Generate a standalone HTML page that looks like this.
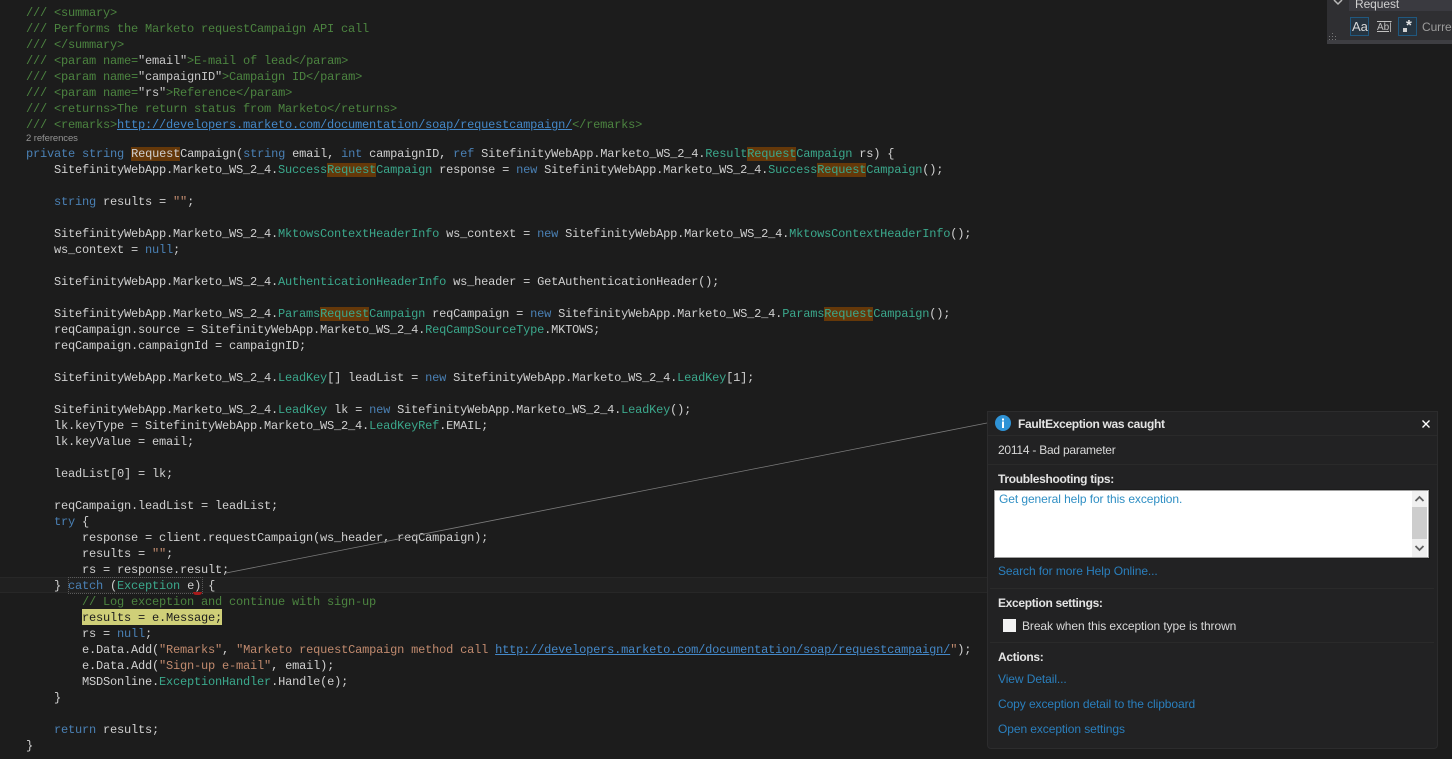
<!DOCTYPE html>
<html><head><meta charset="utf-8"><style>
html,body{margin:0;padding:0;background:#1c1c1c}
#p{position:relative;width:1452px;height:759px;overflow:hidden;background:#1c1c1c}
.l{position:absolute;left:26px;height:16px;margin-top:1px;font:12px/16px "Liberation Mono",monospace;letter-spacing:-.2px;color:#d0d0d0;white-space:pre}
.c{color:#4c8440}.w{color:#c8c8c8}.k{color:#4a80b4}.t{color:#3ba88c}.s{color:#c08a6e}
.u{color:#4488c8;text-decoration:underline}
.h{background:#653809}
.a{position:absolute;font:12px/16px "Liberation Sans",sans-serif;letter-spacing:-.08px;color:#d8d8d8;white-space:pre}
.b{font-weight:bold;color:#e4e4e4;letter-spacing:-.32px}
.lk{color:#2a7fbd}
.d{position:absolute;height:1px;background:#2a2a2a}
</style></head><body><div id="p">
<div style="position:absolute;left:0;top:577px;width:987px;height:14px;background:#202020;border-top:1px solid #272727;border-bottom:1px solid #272727"></div>
<div class="l c" style="top:4px">/// &lt;summary&gt;</div>
<div class="l c" style="top:20px">/// Performs the Marketo requestCampaign API call</div>
<div class="l c" style="top:36px">/// &lt;/summary&gt;</div>
<div class="l c" style="top:52px">/// &lt;param name=<span class="w">"email"</span>&gt;E-mail of lead&lt;/param&gt;</div>
<div class="l c" style="top:68px">/// &lt;param name=<span class="w">"campaignID"</span>&gt;Campaign ID&lt;/param&gt;</div>
<div class="l c" style="top:84px">/// &lt;param name=<span class="w">"rs"</span>&gt;Reference&lt;/param&gt;</div>
<div class="l c" style="top:100px">/// &lt;returns&gt;The return status from Marketo&lt;/returns&gt;</div>
<div class="l c" style="top:116px">/// &lt;remarks&gt;<span class="u">http://developers.marketo.com/documentation/soap/requestcampaign/</span>&lt;/remarks&gt;</div>
<div class="a" style="left:26px;top:132px;font-size:9.5px;line-height:13px;color:#949494">2 references</div>
<div class="l" style="top:145px"><span class="k">private</span> <span class="k">string</span> <span class="h">Request</span>Campaign(<span class="k">string</span> email, <span class="k">int</span> campaignID, <span class="k">ref</span> SitefinityWebApp.Marketo_WS_2_4.<span class="t">Result</span><span class="t h">Request</span><span class="t">Campaign</span> rs) {</div>
<div class="l" style="top:161px">    SitefinityWebApp.Marketo_WS_2_4.<span class="t">Success</span><span class="t h">Request</span><span class="t">Campaign</span> response = <span class="k">new</span> SitefinityWebApp.Marketo_WS_2_4.<span class="t">Success</span><span class="t h">Request</span><span class="t">Campaign</span>();</div>
<div class="l" style="top:193px">    <span class="k">string</span> results = <span class="s">""</span>;</div>
<div class="l" style="top:225px">    SitefinityWebApp.Marketo_WS_2_4.<span class="t">MktowsContextHeaderInfo</span> ws_context = <span class="k">new</span> SitefinityWebApp.Marketo_WS_2_4.<span class="t">MktowsContextHeaderInfo</span>();</div>
<div class="l" style="top:241px">    ws_context = <span class="k">null</span>;</div>
<div class="l" style="top:273px">    SitefinityWebApp.Marketo_WS_2_4.<span class="t">AuthenticationHeaderInfo</span> ws_header = GetAuthenticationHeader();</div>
<div class="l" style="top:305px">    SitefinityWebApp.Marketo_WS_2_4.<span class="t">Params</span><span class="t h">Request</span><span class="t">Campaign</span> reqCampaign = <span class="k">new</span> SitefinityWebApp.Marketo_WS_2_4.<span class="t">Params</span><span class="t h">Request</span><span class="t">Campaign</span>();</div>
<div class="l" style="top:321px">    reqCampaign.source = SitefinityWebApp.Marketo_WS_2_4.<span class="t">ReqCampSourceType</span>.MKTOWS;</div>
<div class="l" style="top:337px">    reqCampaign.campaignId = campaignID;</div>
<div class="l" style="top:369px">    SitefinityWebApp.Marketo_WS_2_4.<span class="t">LeadKey</span>[] leadList = <span class="k">new</span> SitefinityWebApp.Marketo_WS_2_4.<span class="t">LeadKey</span>[1];</div>
<div class="l" style="top:401px">    SitefinityWebApp.Marketo_WS_2_4.<span class="t">LeadKey</span> lk = <span class="k">new</span> SitefinityWebApp.Marketo_WS_2_4.<span class="t">LeadKey</span>();</div>
<div class="l" style="top:417px">    lk.keyType = SitefinityWebApp.Marketo_WS_2_4.<span class="t">LeadKeyRef</span>.EMAIL;</div>
<div class="l" style="top:433px">    lk.keyValue = email;</div>
<div class="l" style="top:465px">    leadList[0] = lk;</div>
<div class="l" style="top:497px">    reqCampaign.leadList = leadList;</div>
<div class="l" style="top:513px">    <span class="k">try</span> {</div>
<div class="l" style="top:529px">        response = client.requestCampaign(ws_header, reqCampaign);</div>
<div class="l" style="top:545px">        results = <span class="s">""</span>;</div>
<div class="l" style="top:561px">        rs = response.result;</div>
<div style="position:absolute;left:68px;top:577px;width:133px;height:15px;border:1px dotted #5a5a5a"></div>
<div class="l" style="top:577px">    } <span class="k">catch</span> (<span class="t">Exception</span> e) {</div>
<div style="position:absolute;left:193px;top:592px;width:9px;height:3px;background:#a81a1a;border-radius:0 0 4px 4px"></div>
<div class="l c" style="top:593px">        // Log exception and continue with sign-up</div>
<div style="position:absolute;left:82px;top:609px;width:140px;height:16px;background:#cfcf78"></div>
<div class="l" style="top:609px;color:#1c1c1c">        results = e.Message;</div>
<div class="l" style="top:625px">        rs = <span class="k">null</span>;</div>
<div class="l" style="top:641px">        e.Data.Add(<span class="s">"Remarks"</span>, <span class="s">"Marketo requestCampaign method call </span><span class="u">http://developers.marketo.com/documentation/soap/requestcampaign/</span><span class="s">"</span>);</div>
<div class="l" style="top:657px">        e.Data.Add(<span class="s">"Sign-up e-mail"</span>, email);</div>
<div class="l" style="top:673px">        MSDSonline.<span class="t">ExceptionHandler</span>.Handle(e);</div>
<div class="l" style="top:689px">    }</div>
<div class="l" style="top:721px">    <span class="k">return</span> results;</div>
<div class="l" style="top:737px">}</div>
<svg style="position:absolute;left:0;top:0" width="1452" height="759"><line x1="226" y1="573" x2="987" y2="423" stroke="#7c7c7c" stroke-width=".8"/></svg>

<div style="position:absolute;left:1327px;top:0;width:125px;height:44px;background:#2f2f32"></div>
<div style="position:absolute;left:1327px;top:40px;width:125px;height:4px;background:#3e3e42"></div>
<div style="position:absolute;left:1349px;top:0;width:103px;height:11px;background:#3a3a40"></div>
<div class="a" style="left:1355px;top:-4px;color:#d0d0d0">Request</div>
<svg style="position:absolute;left:1327px;top:0" width="125" height="44"><path d="M7 0l4 4 4-4" fill="none" stroke="#b8b8b8" stroke-width="1.5"/><g fill="#777"><rect x="2" y="36" width="1" height="1"/><rect x="5" y="33" width="1" height="1"/><rect x="5" y="36" width="1" height="1"/><rect x="2" y="39" width="1" height="1"/><rect x="5" y="39" width="1" height="1"/><rect x="8" y="39" width="1" height="1"/><rect x="8" y="36" width="1" height="1"/></g>
<rect x="23.500" y="17.500" width="18" height="18" fill="#263440" stroke="#20587f"/><rect x="71.500" y="17.500" width="18" height="18" fill="#263440" stroke="#20587f"/><rect x="76" y="28" width="4" height="4" fill="#d0d0d0"/></svg>
<div class="a" style="left:1352px;top:19px;font-weight:normal;font-size:13px;color:#d8d8d8">Aa</div>
<div class="a" style="left:1377px;top:20px;font-size:10px;color:#c0c0c0;text-decoration:underline overline">Ab|</div>
<div class="a" style="left:1406px;top:18px;font-weight:bold;font-size:15px;color:#e4e4e4">*</div>
<div class="a" style="left:1422px;top:19px;color:#9c9c9c">Curre</div>

<div style="position:absolute;left:987px;top:411px;width:449px;height:336px;background:#222223;border:1px solid #2c2c2d;border-radius:0 0 4px 4px"></div>
<div class="d" style="left:988px;top:435px;width:449px"></div>
<div class="d" style="left:988px;top:464px;width:449px"></div>
<div class="d" style="left:990px;top:588px;width:444px"></div>
<div class="d" style="left:990px;top:642px;width:444px"></div>
<svg style="position:absolute;left:995px;top:414px" width="18" height="18"><circle cx="8" cy="9" r="8" fill="#2f93d6"/><rect x="7" y="7.500" width="2" height="6.500" fill="#fff"/><rect x="7" y="4.500" width="2" height="2" fill="#fff"/></svg>
<div class="a b" style="left:1018px;top:416px">FaultException was caught</div>
<svg style="position:absolute;left:1421px;top:419px" width="10" height="10"><path d="M1.500 1.500l7 7M8.500 1.500l-7 7" stroke="#fff" stroke-width="1.400" fill="none"/></svg>
<div class="a" style="left:998px;top:442px;letter-spacing:-.24px">20114 - Bad parameter</div>
<div class="a b" style="left:998px;top:471px">Troubleshooting tips:</div>
<div style="position:absolute;left:994px;top:490px;width:433px;height:66px;background:#fff;border:1px solid #a0a0a0;outline:1px solid #1c1c1c"></div>
<div style="position:absolute;left:1412px;top:491px;width:15px;height:66px;background:#f0f0f0"></div>
<div style="position:absolute;left:1412px;top:507px;width:15px;height:32px;background:#cdcdcd"></div>
<svg style="position:absolute;left:1412px;top:491px" width="15" height="66"><path d="M3.500 10l4-4 4 4M3.500 55l4 4 4-4" fill="none" stroke="#606060" stroke-width="1.800"/></svg>
<div class="a" style="left:999px;top:491px;color:#2f8fc4">Get general help for this exception.</div>
<div class="a lk" style="left:998px;top:563px">Search for more Help Online...</div>
<div class="a b" style="left:998px;top:595px">Exception settings:</div>
<div style="position:absolute;left:1003px;top:619px;width:13px;height:13px;background:#f2f2f2"></div>
<div class="a" style="left:1022px;top:618px">Break when this exception type is thrown</div>
<div class="a b" style="left:998px;top:649px">Actions:</div>
<div class="a lk" style="left:998px;top:671px">View Detail...</div>
<div class="a lk" style="left:998px;top:696px">Copy exception detail to the clipboard</div>
<div class="a lk" style="left:998px;top:721px">Open exception settings</div>
</div></body></html>
